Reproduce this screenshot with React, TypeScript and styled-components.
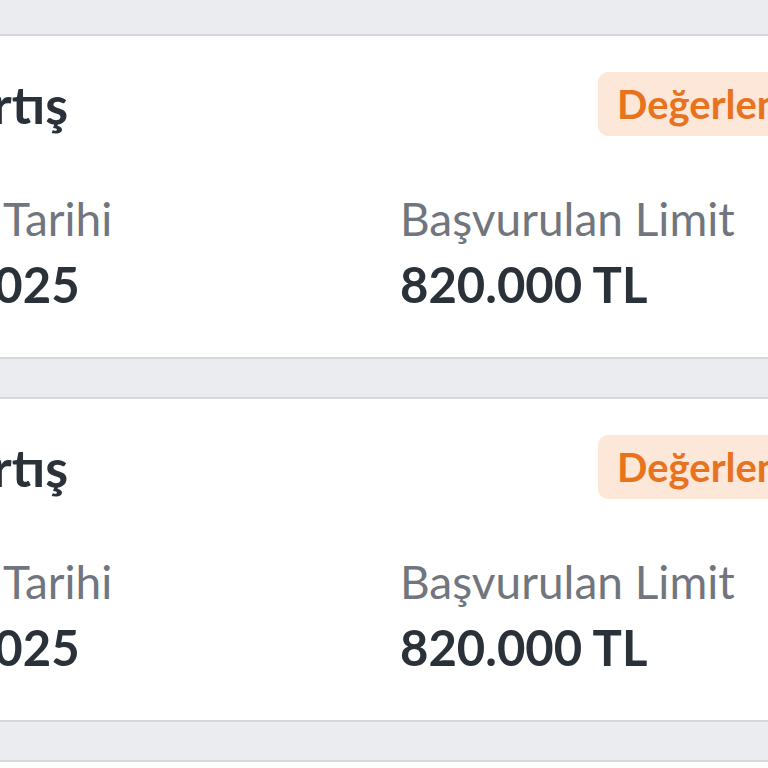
import React from 'react';
import styled, { createGlobalStyle } from 'styled-components';

const GlobalStyle = createGlobalStyle`
  html, body {
    margin: 0;
    padding: 0;
    background: #ebecf0;
  }
  body {
    font-family: Lato, 'Noto Sans', 'Liberation Sans', sans-serif;
    -webkit-font-smoothing: antialiased;
  }
`;

// the screenshot is a zoomed crop, so the card content starts left of the viewport
const SHIFT = 171;

const Page = styled.div`
  width: 768px;
  height: 768px;
  overflow: hidden;
  background: #ebecf0;
`;

const List = styled.div`
  display: flex;
  flex-direction: column;
  gap: 38px;
  padding-top: 34px;
`;

const Card = styled.div`
  background: #fff;
  border-top: 2px solid #d6d7dc;
  border-bottom: 2px solid #d6d7dc;
  height: 321px;
  box-sizing: content-box;
  overflow: hidden;
`;

const CardBody = styled.div`
  display: grid;
  grid-template-columns: ${400 + SHIFT}px 1fr;
  grid-template-rows: 136px auto;
  width: ${1400 + SHIFT}px;
  margin-left: -${SHIFT}px;
`;

const Title = styled.h3`
  margin: 0;
  align-self: center;
  font-size: 52px;
  font-weight: 700;
  color: #2b3138;
  line-height: 60px;
`;

const BadgeCell = styled.div`
  display: flex;
  align-items: center;
  padding-left: 198px;
`;

const Badge = styled.span`
  display: inline-flex;
  align-items: center;
  height: 64px;
  padding: 0 19px;
  border-radius: 10px;
  background: #fde7d9;
  color: #e8731f;
  font-size: 40px;
  font-weight: 700;
`;

const Field = styled.div`
  display: flex;
  flex-direction: column;
  padding-top: 17px;
`;

const Label = styled.span`
  font-size: 46px;
  color: #71767e;
  line-height: 60px;
`;

const Value = styled.span`
  font-size: 49px;
  font-weight: 700;
  color: #2b3138;
  line-height: 70px;
`;

const applications = [
  { title: 'Limit Artış', status: 'Değerlendiriliyor', date: '12.03.2025', limit: '820.000 TL' },
  { title: 'Limit Artış', status: 'Değerlendiriliyor', date: '12.03.2025', limit: '820.000 TL' },
  { title: 'Limit Artış', status: 'Değerlendiriliyor', date: '12.03.2025', limit: '820.000 TL' },
];

const App: React.FC = () => (
  <Page>
    <GlobalStyle />
    <List>
      {applications.map((a, i) => (
        <Card key={i}>
          <CardBody>
            <Title>{a.title}</Title>
            <BadgeCell>
              <Badge>{a.status}</Badge>
            </BadgeCell>
            <Field>
              <Label>Başvuru Tarihi</Label>
              <Value>{a.date}</Value>
            </Field>
            <Field>
              <Label>Başvurulan Limit</Label>
              <Value>{a.limit}</Value>
            </Field>
          </CardBody>
        </Card>
      ))}
    </List>
  </Page>
);

export default App;
